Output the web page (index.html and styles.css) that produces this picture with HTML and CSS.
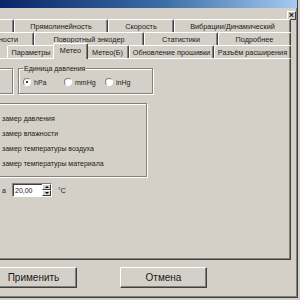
FILE: index.html
```html
<!DOCTYPE html>
<html lang="ru">
<head>
  <meta charset="UTF-8" />
  <title>Настройки</title>
  <link rel="stylesheet" href="styles.css">
</head>
<body>

  <div class="window">
    <div class="titlebar"></div>

    <div class="caption">
      <span class="close-btn">×</span>
    </div>

    <!-- Tab rows, back to front -->
    <div class="tab-row clip">
      <div class="tab w60"></div>
      <div class="tab w94">Прямолинейность</div>
      <div class="tab w66">Скорость</div>
      <div class="tab w117">Вибрации/Динамический</div>
    </div>
    <div class="tab-row clip">
      <div class="tab w60 tail">Погрешности</div>
      <div class="tab w110">Поворотный энкодер</div>
      <div class="tab w74">Статистики</div>
      <div class="tab w73">Подробнее</div>
    </div>
    <div class="tab-row">
      <div class="tab w48">Параметры</div>
      <div class="tab w35 active">Метео</div>
      <div class="tab w43">Метео(Б)</div>
      <div class="tab w85">Обновление прошивки</div>
      <div class="tab w77">Разъём расширения</div>
    </div>

    <div class="panel">
      <div class="top-row">
        <div class="group group-stub"></div>
        <div class="group group-units">
          <div class="group-title">Единица давления</div>
          <div class="radios">
            <label class="radio"><span class="dot checked"></span>hPa</label>
            <label class="radio"><span class="dot"></span>mmHg</label>
            <label class="radio"><span class="dot"></span>inHg</label>
          </div>
        </div>
      </div>

      <div class="group group-sensors">
        <div class="check">замер давления</div>
        <div class="check">замер влажности</div>
        <div class="check">замер температуры воздуха</div>
        <div class="check">замер температуры материала</div>
      </div>

      <div class="spin-row">
        <span class="spin-label">а</span>
        <div class="spin">
          <span class="spin-value">20,00</span>
          <span class="spin-btns">
            <span class="arrow up"></span>
            <span class="arrow down"></span>
          </span>
        </div>
        <span class="unit">°C</span>
      </div>
    </div>

    <div class="buttons">
      <button class="btn apply">Применить</button>
      <button class="btn cancel">Отмена</button>
    </div>
  </div>

</body>
</html>
```

FILE: styles.css
```css
body {
  margin: 0;
  width: 300px;
  height: 300px;
  overflow: hidden;
  background: #d4d0c8;
  font-family: "Liberation Sans", Arial, sans-serif;
  color: #1a1a1a;
}

.window {
  width: 298px;
  height: 298px;
  box-sizing: border-box;
  border-right: 1px solid #404040;
  border-bottom: 1px solid #404040;
  box-shadow: inset -1px -1px 0 #808080;
  overflow: hidden;
}

.titlebar {
  height: 8px;
  background: linear-gradient(to right, #0a246a, #3a6ea5 55%, #a6caf0);
}

.caption {
  height: 11px;
  display: flex;
  justify-content: flex-end;
  padding-right: 1px;
}

.close-btn {
  width: 9px;
  height: 9px;
  margin-top: 3px;
  box-sizing: border-box;
  border: 1px solid;
  border-color: #fff #404040 #404040 #fff;
  font-size: 9px;
  line-height: 6px;
  text-align: center;
  font-weight: bold;
}

/* Tabs */
.tab-row {
  display: flex;
  justify-content: flex-end;
  height: 13px;
  margin-right: 6px;
}

.tab-row.clip {
  overflow: hidden;
}

.tab {
  flex: none;
  height: 13px;
  box-sizing: border-box;
  border: 1px solid #fff;
  border-right-color: #404040;
  border-bottom: none;
  border-radius: 2px 2px 0 0;
  box-shadow: inset -1px 0 0 #808080;
  display: flex;
  align-items: center;
  justify-content: center;
  font-size: 7.3px;
  white-space: nowrap;
}

.tab.tail {
  justify-content: flex-end;
  padding-right: 15px;
}

.tab.active {
  position: relative;
  z-index: 1;
  height: 16px;
  margin: -2px -2px -1px;
  padding-bottom: 2px;
  background: #d4d0c8;
}

.w35 { width: 35px; }
.w43 { width: 43px; }
.w48 { width: 48px; }
.w60 { width: 60px; }
.w66 { width: 66px; }
.w73 { width: 73px; }
.w74 { width: 74px; }
.w77 { width: 77px; }
.w85 { width: 85px; }
.w94 { width: 94px; }
.w110 { width: 110px; }
.w117 { width: 117px; }

/* Page panel */
.panel {
  height: 202px;
  margin-left: -4px;
  margin-right: 6px;
  box-sizing: border-box;
  border: 1px solid #fff;
  border-right-color: #404040;
  border-bottom-color: #404040;
  box-shadow: inset -1px -1px 0 #808080;
  font-size: 7px;
}

.group {
  box-sizing: border-box;
  border: 1px solid #808080;
  box-shadow: 1px 1px 0 #fff, inset 1px 1px 0 #fff;
}

.group-title {
  display: table;
  margin: -5px 0 0 4px;
  padding: 0 1px;
  line-height: 9px;
  background: #d4d0c8;
}

.top-row {
  display: flex;
  gap: 5px;
  margin-top: 9px;
}

.group-stub {
  width: 16px;
  height: 26px;
  border-left: none;
}

.group-units {
  width: 135px;
  height: 26px;
}

.radios {
  display: flex;
  margin: 5px 0 0 4px;
}

.radio {
  width: 41px;
  display: flex;
  align-items: center;
  gap: 3px;
}

.dot {
  width: 8px;
  height: 8px;
  box-sizing: border-box;
  border-radius: 50%;
  border: 1px solid;
  border-color: #808080 #fff #fff #808080;
  background: #fff;
  display: flex;
  align-items: center;
  justify-content: center;
}

.dot.checked::after {
  content: "";
  width: 2px;
  height: 2px;
  border-radius: 50%;
  background: #000;
}

.group-sensors {
  width: 150px;
  height: 74px;
  margin-top: 9px;
  padding: 7px 0 0 5px;
  border-left: none;
}

.check {
  height: 15px;
  line-height: 15px;
}

.spin-row {
  display: flex;
  align-items: center;
  margin-top: 6px;
  height: 14px;
}

.spin-label {
  width: 15px;
  padding-left: 5px;
  box-sizing: border-box;
}

.spin {
  width: 40px;
  height: 14px;
  box-sizing: border-box;
  border: 1px solid;
  border-color: #808080 #fff #fff #808080;
  box-shadow: inset 1px 1px 0 #404040;
  background: #fff;
  display: flex;
  align-items: center;
  justify-content: space-between;
}

.spin-value {
  padding-left: 2px;
}

.spin-btns {
  width: 9px;
  height: 12px;
  display: flex;
  flex-direction: column;
  background: #d4d0c8;
}

.arrow {
  flex: 1;
  box-sizing: border-box;
  border: 1px solid;
  border-color: #fff #404040 #404040 #fff;
  display: flex;
  align-items: center;
  justify-content: center;
}

.arrow::after {
  content: "";
  border-left: 2px solid transparent;
  border-right: 2px solid transparent;
}

.arrow.up::after { border-bottom: 2px solid #000; }
.arrow.down::after { border-top: 2px solid #000; }

.unit {
  margin-left: 6px;
}

/* Dialog buttons */
.buttons {
  display: flex;
  gap: 43px;
  margin-top: 7px;
}

.btn {
  width: 87px;
  height: 21px;
  margin: 0;
  padding: 0;
  background: #d4d0c8;
  border: 1px solid;
  border-color: #fff #404040 #404040 #fff;
  box-shadow: inset -1px -1px 0 #808080;
  font-family: "Liberation Sans", Arial, sans-serif;
  font-size: 10px;
  color: #1a1a1a;
}

.btn.apply {
  margin-left: -10px;
}
```
